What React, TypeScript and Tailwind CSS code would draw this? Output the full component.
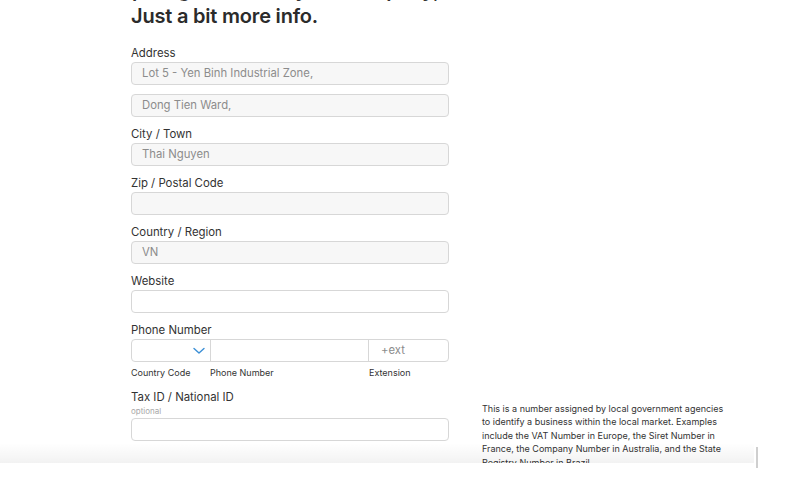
import React from "react";

const font = { fontFamily: "Inter, 'Liberation Sans', sans-serif" };

function Label({ children }: { children: React.ReactNode }) {
  return <div className="h-[16px] text-[11.4px] leading-[16px] text-[#333]">{children}</div>;
}

function Field({ value, gray = true }: { value?: string; gray?: boolean }) {
  return (
    <div
      className={`h-[23px] rounded-[4px] border border-[#d7d7d7] px-[10px] text-[11.3px] leading-[21px] text-[#8c8c8c] ${
        gray ? "bg-[#f7f7f7]" : "bg-white"
      }`}
    >
      {value}
    </div>
  );
}

export default function App() {
  return (
    <div className="relative h-[477px] w-[787px] overflow-hidden bg-white" style={font}>
      <div className="ml-[100px] mt-[-18px] h-[20px] overflow-hidden whitespace-nowrap text-[20px] font-semibold leading-[16px] text-[#333]">
        Help us get to know your company,
      </div>
      <div className="ml-[131px] flex flex-col">
        <div className="mt-[2px] h-[25px] text-[20px] font-semibold leading-[25px] tracking-[-0.2px] text-[#2b2b2b]">
          Just a bit more info.
        </div>
        <div className="mt-[16px] flex w-[318px] flex-col">
          <Label>Address</Label>
          <div className="mt-[1px]">
            <Field value="Lot 5 - Yen Binh Industrial Zone," />
          </div>
          <div className="mt-[9px]">
            <Field value="Dong Tien Ward," />
          </div>
          <div className="mt-[9px]">
            <Label>City / Town</Label>
          </div>
          <div className="mt-[1px]">
            <Field value="Thai Nguyen" />
          </div>
          <div className="mt-[9px]">
            <Label>Zip / Postal Code</Label>
          </div>
          <div className="mt-[1px]">
            <Field />
          </div>
          <div className="mt-[9px]">
            <Label>Country / Region</Label>
          </div>
          <div className="mt-[1px]">
            <Field value="VN" />
          </div>
          <div className="mt-[9px]">
            <Label>Website</Label>
          </div>
          <div className="mt-[1px]">
            <Field gray={false} />
          </div>
          <div className="mt-[9px]">
            <Label>Phone Number</Label>
          </div>
          <div className="mt-[1px] flex h-[23px] rounded-[4px] border border-[#d7d7d7] bg-white">
            <div className="flex w-[79px] items-center justify-end border-r border-[#d7d7d7] pr-[5px]">
              <svg width="12" height="8" viewBox="0 0 12 8" fill="none">
                <path d="M1 1.5 L6 6 L11 1.5" stroke="#3b8fd6" strokeWidth="1.4" strokeLinecap="round" strokeLinejoin="round" />
              </svg>
            </div>
            <div className="w-[158px] border-r border-[#d7d7d7]"></div>
            <div className="flex-1 pl-[12px] text-[11.3px] leading-[21px] text-[#8c8c8c]">+ext</div>
          </div>
          <div className="mt-[4px] flex h-[14px] text-[9px] leading-[14px] text-[#333]">
            <div className="w-[79px]">Country Code</div>
            <div className="w-[159px]">Phone Number</div>
            <div>Extension</div>
          </div>
        </div>
        <div className="mt-[9px] flex">
          <div className="flex w-[318px] flex-col">
            <Label>Tax ID / National ID</Label>
            <div className="h-[12px] text-[8px] leading-[12px] text-[#a8a8a8]">optional</div>
            <div className="mt-[1px]">
              <Field gray={false} />
            </div>
          </div>
          <div className="ml-[33px] mt-[13px] w-[246px] text-[9px] leading-[13.4px] text-[#333]">
            This is a number assigned by local government agencies to identify a business within the local market. Examples
            include the VAT Number in Europe, the Siret Number in France, the Company Number in Australia, and the State
            Registry Number in Brazil.
          </div>
        </div>
      </div>
      <div className="absolute bottom-0 left-0 w-[787px]">
        <div className="h-[20px] w-[754px] bg-gradient-to-b from-[rgba(0,0,0,0)] to-[rgba(0,0,0,0.05)]"></div>
        <div className="h-[14px] bg-white"></div>
      </div>
      <div className="absolute left-[756px] top-[447px] h-[21px] w-[2px] bg-[#cfcfcf]"></div>
    </div>
  );
}
